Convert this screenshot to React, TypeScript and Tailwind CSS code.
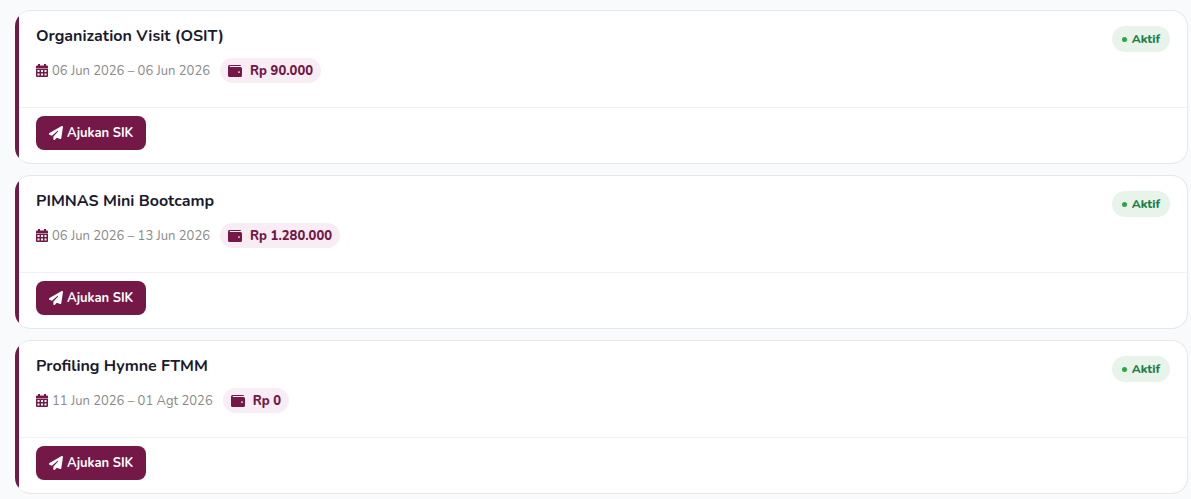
import { FaPaperPlane } from "react-icons/fa6";

const programs = [
  { title: "Organization Visit (OSIT)", period: "06 Jun 2026 – 06 Jun 2026", budget: "Rp 90.000" },
  { title: "PIMNAS Mini Bootcamp", period: "06 Jun 2026 – 13 Jun 2026", budget: "Rp 1.280.000" },
  { title: "Profiling Hymne FTMM", period: "11 Jun 2026 – 01 Agt 2026", budget: "Rp 0" },
];

type Program = (typeof programs)[number];

function CalendarIcon() {
  return (
    <svg viewBox="0 0 12 13" className="h-[13px] w-3 fill-[#731847]" aria-hidden="true">
      <path d="M2 0h2v1.5h4V0h2v1.5h1a1 1 0 0 1 1 1V4H0V2.5a1 1 0 0 1 1-1h1z" />
      <path
        fillRule="evenodd"
        d="M0 4.6h12V12a1 1 0 0 1-1 1H1a1 1 0 0 1-1-1zM1.5 6v2h2V6zM5 6v2h2V6zM8.5 6v2h2V6zM1.5 9.5v2h2v-2zM5 9.5v2h2v-2zM8.5 9.5v2h2v-2z"
      />
    </svg>
  );
}

function WalletIcon() {
  return (
    <svg viewBox="0 0 14 12" className="h-3 w-[14px] fill-[#731847]" aria-hidden="true">
      <path
        fillRule="evenodd"
        d="M1.5 0H12a1 1 0 0 1 1 1H2.2a.5.5 0 0 0 0 1.1h10.3A1.5 1.5 0 0 1 14 3.6v6.9a1.5 1.5 0 0 1-1.5 1.5h-11A1.5 1.5 0 0 1 0 10.5v-9A1.5 1.5 0 0 1 1.5 0zM11 6.2A.9.9 0 1 0 11 8a.9.9 0 0 0 0-1.8z"
      />
    </svg>
  );
}

function ProgramCard({ program }: { program: Program }) {
  return (
    <article className="flex overflow-hidden rounded-2xl border border-l-0 border-[#e6e7ea] bg-white">
      <div className="w-1 shrink-0 bg-[#731847]"></div>
      <div className="min-w-0 flex-1">
        <div className="flex items-start justify-between px-[17px] pt-[15px] pb-6">
          <div>
            <h3 className="text-base leading-5 font-bold text-[#1a1a2e]">{program.title}</h3>
            <div className="mt-3 flex items-center gap-[10px]">
              <span className="flex items-center gap-1 text-[13px] leading-5 text-[#8a8a8a]">
                <CalendarIcon />
                {program.period}
              </span>
              <span className="flex items-center gap-2 rounded-full bg-[#f8edf4] px-2 pt-[3px] pb-px text-[13px] leading-[21px] font-extrabold text-[#731847]">
                <span className="pb-[2px]">
                  <WalletIcon />
                </span>
                {program.budget}
              </span>
            </div>
          </div>
          <span className="flex items-center gap-[5px] rounded-full bg-[#e8f3ea] px-[10px] py-1 text-xs leading-[18px] font-extrabold text-[#1e7e44]">
            <span className="size-[5px] rounded-full bg-[#28a745]"></span>
            Aktif
          </span>
        </div>
        <div className="border-t border-[#f2f2f4] px-[17px] pt-2 pb-[13px]">
          <button
            type="button"
            className="flex items-center gap-1 rounded-lg bg-[#731847] px-[13px] py-[7px] text-[13px] leading-5 font-bold text-white"
          >
            <FaPaperPlane className="size-[14px]" />
            Ajukan SIK
          </button>
        </div>
      </div>
    </article>
  );
}

export default function App() {
  return (
    <main className="flex min-h-screen flex-col gap-[11px] bg-[#f9fafc] pt-[10px] pr-[3px] pb-[5px] pl-[15px] font-['Nunito','Open_Sans',sans-serif]">
      {programs.map((program) => (
        <ProgramCard key={program.title} program={program} />
      ))}
    </main>
  );
}
